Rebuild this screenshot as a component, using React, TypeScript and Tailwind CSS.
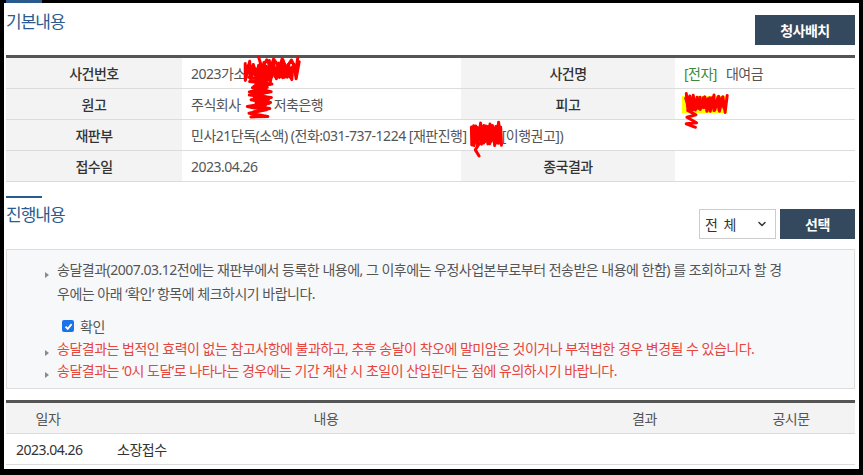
import { ChevronDown } from 'lucide-react';

type Stroke = {
    x0: number;
    y0: number;
    x1: number;
    y1: number;
    n: number;
    seed: number;
    vertical?: boolean;
};

// red pen marks over redacted names
function zigzag(s: Stroke) {
    let seed = s.seed;
    const rnd = () => {
        seed = (seed * 9301 + 49297) % 233280;
        return seed / 233280;
    };
    const pts: string[] = [];
    for (let i = 0; i <= s.n; i++) {
        const t = i / s.n;
        const edge = i % 2 === 0 ? rnd() * 0.25 : 1 - rnd() * 0.25;
        let x: number;
        let y: number;
        if (s.vertical) {
            y = s.y0 + (s.y1 - s.y0) * t + (rnd() - 0.5) * 3;
            x = s.x0 + (s.x1 - s.x0) * edge;
        } else {
            x = s.x0 + (s.x1 - s.x0) * t + (rnd() - 0.5) * 3;
            y = s.y0 + (s.y1 - s.y0) * edge;
        }
        pts.push(`${x.toFixed(1)} ${y.toFixed(1)}`);
    }
    return 'M' + pts.join(' L');
}

function Scribble({
    width,
    height,
    strokes,
    className,
}: {
    width: number;
    height: number;
    strokes: Stroke[];
    className: string;
}) {
    return (
        <svg
            width={width}
            height={height}
            viewBox={`0 0 ${width} ${height}`}
            className={className}
        >
            {strokes.map((s, i) => (
                <path
                    key={i}
                    d={zigzag(s)}
                    fill="none"
                    stroke="#ff0000"
                    strokeWidth={3}
                    strokeLinejoin="round"
                    strokeLinecap="round"
                />
            ))}
        </svg>
    );
}

function Bullet({ className }: { className: string }) {
    return (
        <svg width="4" height="6" viewBox="0 0 4 6" className={className}>
            <path d="M0 0 L4 3 L0 6 Z" fill="#8a8a8a" />
        </svg>
    );
}

function Label({ children }: { children: React.ReactNode }) {
    return (
        <div className="flex items-center justify-center bg-[#f3f3f3] font-medium text-[#333]">
            {children}
        </div>
    );
}

function Value({ children, className = '' }: { children?: React.ReactNode; className?: string }) {
    return (
        <div className={`relative flex items-center whitespace-nowrap pl-[9px] text-[#555] ${className}`}>
            {children}
        </div>
    );
}

export default function App() {
    return (
        <div className="flex h-[475px] w-full flex-col bg-black px-[4px] pb-[6px] font-['Noto_Sans','Noto_Sans_CJK_KR',sans-serif] text-[14px] tracking-[-0.5px]">
            <div className="flex h-[3px] shrink-0">
                <div className="ml-[2px] w-[36px] bg-[#2b5b8e]" />
            </div>

            <div className="flex-1 overflow-hidden bg-white pl-[2px] pr-[4px]">
                {/* 기본내용 */}
                <div className="flex justify-between">
                    <h2 className="mt-[7px] text-[17px] leading-[24px] tracking-[-1px] text-[#2b5b8e]">
                        기본내용
                    </h2>
                    <button
                        type="button"
                        className="mt-[12px] h-[30px] w-[100px] bg-[#35495e] text-[14px] font-bold text-white"
                    >
                        청사배치
                    </button>
                </div>

                <div className="mt-[10px] border-t-[3px] border-[#555]">
                    <div className="grid h-[31px] grid-cols-[176px_279px_214px_1fr] border-b border-[#dcdcdc]">
                        <Label>사건번호</Label>
                        <Value>
                            2023가소
                            <span className="relative inline-block h-[14px] w-[54px]">
                                <Scribble
                                    width={58}
                                    height={66}
                                    className="absolute left-[-2px] top-[-12px] z-10 overflow-visible"
                                    strokes={[
                                        { x0: 0, y0: 6, x1: 54, y1: 28, n: 22, seed: 11 },
                                        { x0: 3, y0: 9, x1: 50, y1: 26, n: 18, seed: 37 },
                                        { x0: 6, y0: 12, x1: 46, y1: 24, n: 14, seed: 53 },
                                        { x0: 14, y0: 3, x1: 55, y1: 16, n: 10, seed: 73 },
                                        { x0: 2, y0: 22, x1: 28, y1: 64, n: 14, seed: 5, vertical: true },
                                        { x0: 5, y0: 26, x1: 26, y1: 58, n: 12, seed: 91, vertical: true },
                                        { x0: 8, y0: 30, x1: 24, y1: 54, n: 10, seed: 19, vertical: true },
                                    ]}
                                />
                            </span>
                        </Value>
                        <Label>사건명</Label>
                        <Value className="pl-[7px]">
                            <span className="text-[#3a8a3a]">[전자]</span>
                            <span className="ml-[9px]">대여금</span>
                        </Value>
                    </div>

                    <div className="grid h-[31px] grid-cols-[176px_279px_214px_1fr] border-b border-[#dcdcdc]">
                        <Label>원고</Label>
                        <Value>
                            주식회사&nbsp;
                            <span className="inline-block w-[30px]" />
                            저축은행
                        </Value>
                        <Label>피고</Label>
                        <Value>
                            <span className="absolute left-[7px] top-[7px] h-[17px] w-[45px] bg-[#ffff00]" />
                            <Scribble
                                width={46}
                                height={40}
                                className="absolute left-[8px] top-[2px] z-10 overflow-visible"
                                strokes={[
                                    { x0: 2, y0: 2, x1: 44, y1: 22, n: 18, seed: 23 },
                                    { x0: 4, y0: 5, x1: 42, y1: 20, n: 15, seed: 59 },
                                    { x0: 8, y0: 8, x1: 38, y1: 18, n: 12, seed: 83 },
                                    { x0: 2, y0: 14, x1: 14, y1: 37, n: 7, seed: 17, vertical: true },
                                ]}
                            />
                        </Value>
                    </div>

                    <div className="grid h-[31px] grid-cols-[176px_1fr] border-b border-[#dcdcdc]">
                        <Label>재판부</Label>
                        <Value>
                            민사21단독(소액) (전화:031-737-1224 [재판진행]&nbsp;
                            <span className="relative inline-block h-[14px] w-[32px]">
                                <Scribble
                                    width={34}
                                    height={38}
                                    className="absolute left-0 top-[-8px] z-10 overflow-visible"
                                    strokes={[
                                        { x0: 0, y0: 2, x1: 32, y1: 26, n: 20, seed: 41 },
                                        { x0: 3, y0: 5, x1: 30, y1: 24, n: 16, seed: 67 },
                                        { x0: 6, y0: 8, x1: 26, y1: 22, n: 12, seed: 7 },
                                        { x0: 5, y0: 16, x1: 10, y1: 35, n: 3, seed: 29, vertical: true },
                                    ]}
                                />
                            </span>
                            [이행권고])
                        </Value>
                    </div>

                    <div className="grid h-[31px] grid-cols-[176px_279px_214px_1fr] border-b border-[#dcdcdc]">
                        <Label>접수일</Label>
                        <Value>2023.04.26</Value>
                        <Label>종국결과</Label>
                        <Value />
                    </div>
                </div>

                {/* 진행내용 */}
                <div className="mt-[14px] flex justify-between">
                    <div>
                        <div className="h-[2px] w-[36px] bg-[#2b5b8e]" />
                        <h2 className="mt-[5px] text-[17px] leading-[24px] tracking-[-1px] text-[#2b5b8e]">
                            진행내용
                        </h2>
                    </div>
                    <div className="mt-[13px] flex gap-[4px]">
                        <div className="flex h-[30px] w-[77px] items-center justify-between border border-[#cccccc] bg-white pl-[5px] pr-[7px] text-[#333]">
                            <span className="tracking-[1px]">전 체</span>
                            <ChevronDown size={12} strokeWidth={3} color="#333" />
                        </div>
                        <button
                            type="button"
                            className="h-[30px] w-[75px] bg-[#35495e] text-[14px] font-bold text-white"
                        >
                            선택
                        </button>
                    </div>
                </div>

                <div className="mt-[10px] whitespace-nowrap border border-[#dcdcdc] bg-[#f7f8fa] pb-[6px] pl-[38px] pt-[8px]">
                    <div className="flex items-start text-[#555]">
                        <Bullet className="mr-[8px] mt-[14px] shrink-0" />
                        <p className="leading-[24px]">
                            송달결과(2007.03.12전에는 재판부에서 등록한 내용에, 그 이후에는 우정사업본부로부터 전송받은 내용에 한함) 를 조회하고자 할 경
                            <br />
                            우에는 아래 ‘확인’ 항목에 체크하시기 바랍니다.
                        </p>
                    </div>
                    <div className="mt-[9px] flex h-[22px] items-center gap-[6px] pl-[17px] text-[#555]">
                        <span className="flex h-[12px] w-[12px] items-center justify-center rounded-[2px] bg-[#1a73e8]">
                            <svg width="9" height="9" viewBox="0 0 9 9">
                                <path
                                    d="M1.5 4.6 L3.7 6.8 L7.6 2.2"
                                    fill="none"
                                    stroke="#fff"
                                    strokeWidth="1.8"
                                />
                            </svg>
                        </span>
                        확인
                    </div>
                    <div className="mt-[1px] flex items-start text-[#e5463d]">
                        <Bullet className="mr-[8px] mt-[12px] shrink-0" />
                        <p className="leading-[22px]">
                            송달결과는 법적인 효력이 없는 참고사항에 불과하고, 추후 송달이 착오에 말미암은 것이거나 부적법한 경우 변경될 수 있습니다.
                        </p>
                    </div>
                    <div className="flex items-start text-[#e5463d]">
                        <Bullet className="mr-[8px] mt-[12px] shrink-0" />
                        <p className="leading-[22px]">
                            송달결과는 ‘0시 도달’로 나타나는 경우에는 기간 계산 시 초일이 산입된다는 점에 유의하시기 바랍니다.
                        </p>
                    </div>
                </div>

                <div className="mt-[11px] border-t-[3px] border-[#555]">
                    <div className="grid h-[31px] grid-cols-[84px_472px_165px_1fr] border-b border-[#dcdcdc] bg-[#f3f3f3] text-[#555]">
                        <div className="flex items-center justify-center">일자</div>
                        <div className="flex items-center justify-center">내용</div>
                        <div className="flex items-center justify-center">결과</div>
                        <div className="flex items-center justify-center">공시문</div>
                    </div>
                    <div className="grid h-[31px] grid-cols-[84px_472px_165px_1fr] border-b border-[#dcdcdc] text-[#333]">
                        <div className="flex items-center pl-[10px]">2023.04.26</div>
                        <div className="flex items-center pl-[27px]">소장접수</div>
                        <div />
                        <div />
                    </div>
                </div>
            </div>
        </div>
    );
}
